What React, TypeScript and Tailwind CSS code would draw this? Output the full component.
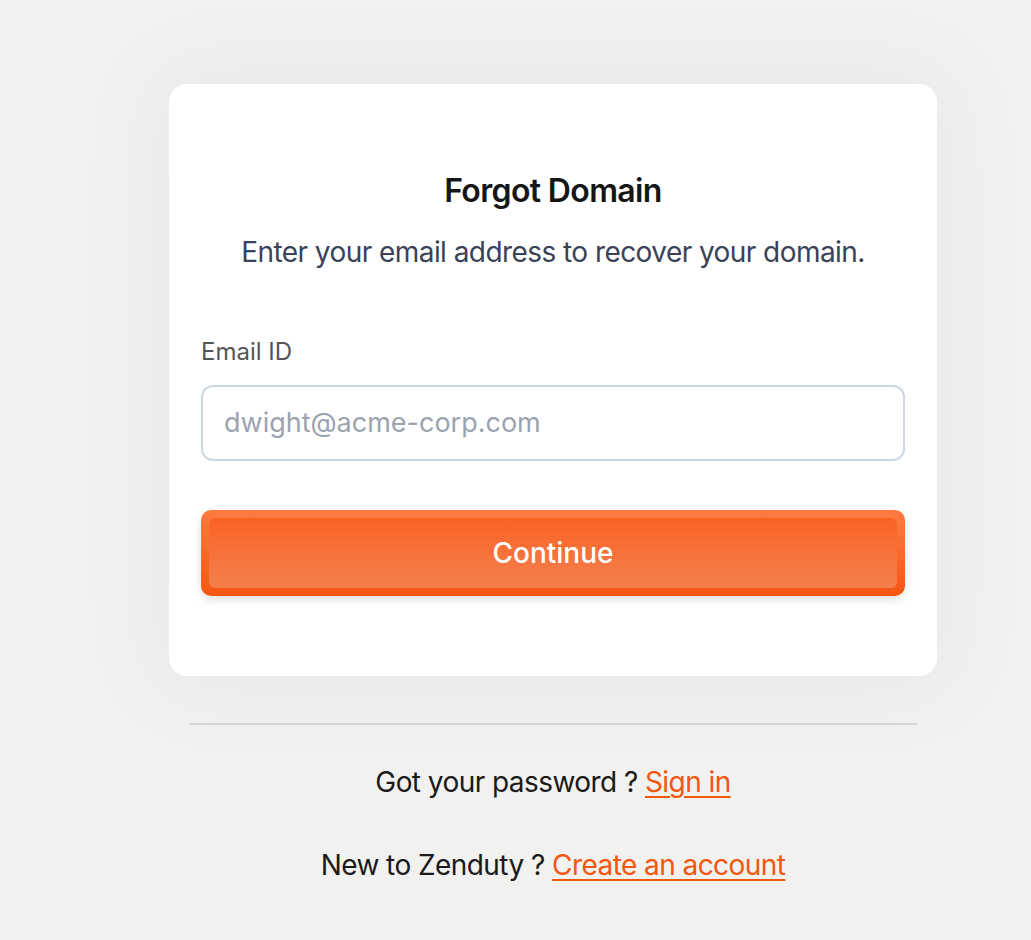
import React from "react";

export default function App() {
  return (
    <div className="min-h-[940px] w-full bg-[#f1f1ef] pt-[84px]" style={{ fontFamily: "Inter, 'Noto Sans', sans-serif" }}>
      <div className="ml-[169px] w-[768px]">
        <div className="rounded-[18px] bg-white px-[32px] pt-[87px] pb-[80px] shadow-[0_0_90px_20px_rgba(0,0,0,0.035)]">
          <h1 className="text-center text-[32px] font-semibold leading-[40px] tracking-[-0.02em] text-[#161616]">Forgot Domain</h1>
          <p className="mt-[23px] text-center text-[28px] leading-[36px] tracking-[-0.02em] text-[#3a4257]">
            Enter your email address to recover your domain.
          </p>
          <label className="mt-[67px] block text-[24px] leading-[30px] text-[#555555]">Email ID</label>
          <div className="mt-[18px] flex h-[76px] items-center rounded-[12px] border-2 border-[#cdd6e1] bg-white px-[21px]">
            <span className="text-[27px] text-[#9ca3b0]">dwight@acme-corp.com</span>
          </div>
          <button className="mt-[49px] block h-[86px] w-full rounded-[10px] bg-gradient-to-b from-[#fd7a40] to-[#f5560f] p-[8px] shadow-[0_4px_8px_rgba(0,0,0,0.12)]">
            <div className="flex h-full w-full items-center justify-center rounded-[6px] bg-gradient-to-b from-[#f96322] to-[#f47f4c]">
              <span className="text-[28px] font-medium text-white">Continue</span>
            </div>
          </button>
        </div>
        <div className="mx-[20px] mt-[47px] h-[2px] bg-[#d6d6d6]" />
        <p className="mt-[39px] text-center text-[28px] leading-[36px] tracking-[-0.02em] text-[#1a1a1a]">
          Got your password ? <a className="text-[#f0570f] underline decoration-2 underline-offset-4">Sign in</a>
        </p>
        <p className="mt-[47px] text-center text-[28px] leading-[36px] tracking-[-0.02em] text-[#1a1a1a]">
          New to Zenduty ? <a className="text-[#f0570f] underline decoration-2 underline-offset-4">Create an account</a>
        </p>
      </div>
    </div>
  );
}
